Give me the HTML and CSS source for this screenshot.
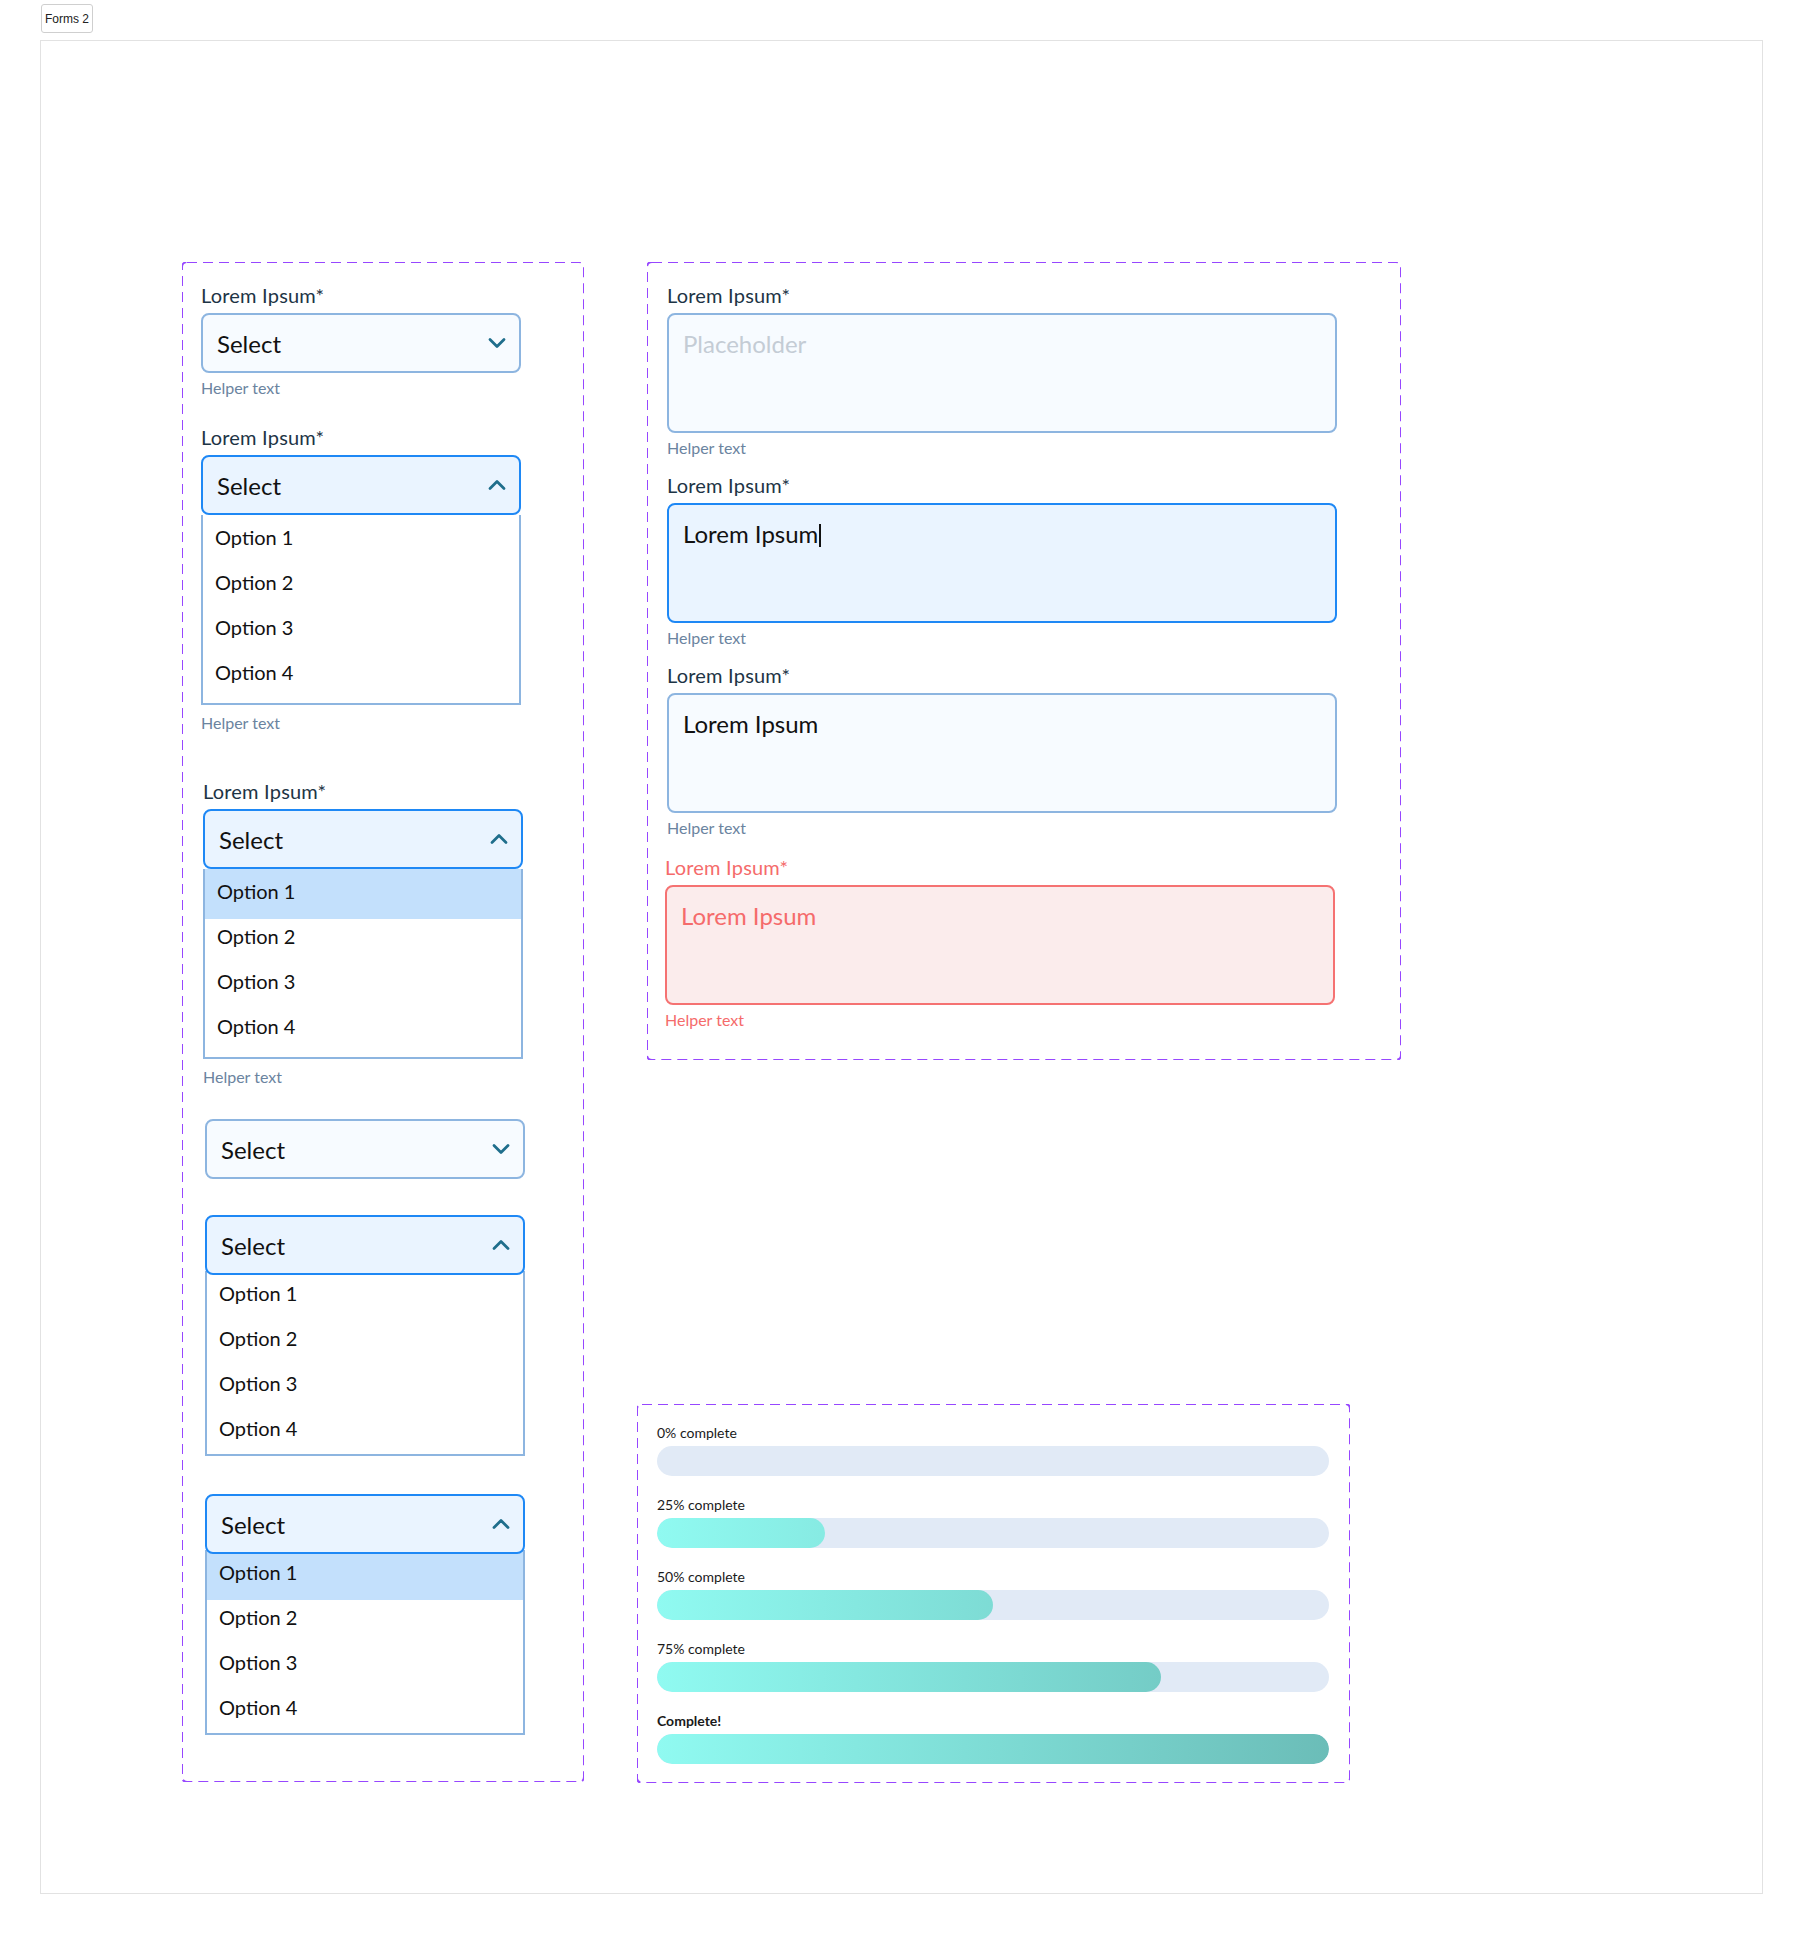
FILE: index.html
```html
<!DOCTYPE html>
<html lang="en">
<head>
<meta charset="utf-8">
<title>Forms 2</title>
<link rel="stylesheet" href="styles.css">
</head>
<body>
<div class="tag">Forms 2</div>
<div class="frame">
  <div class="box box-left">
    <div class="field">
      <div class="label">Lorem Ipsum*</div>
      <div class="select"><span>Select</span><svg class="chev" width="18" height="12" viewBox="0 0 18 12"><polyline points="2,2.5 9,9.5 16,2.5"/></svg></div>
      <div class="helper">Helper text</div>
    </div>
    <div class="field g2">
      <div class="label">Lorem Ipsum*</div>
      <div class="select open"><span>Select</span><svg class="chev" width="18" height="12" viewBox="0 0 18 12"><polyline points="2,9.5 9,2.5 16,9.5"/></svg></div>
      <div class="list">
        <div class="opt">Option 1</div>
        <div class="opt">Option 2</div>
        <div class="opt">Option 3</div>
        <div class="opt">Option 4</div>
      </div>
      <div class="helper after-list">Helper text</div>
    </div>
    <div class="field g3 shift2">
      <div class="label">Lorem Ipsum*</div>
      <div class="select open"><span>Select</span><svg class="chev" width="18" height="12" viewBox="0 0 18 12"><polyline points="2,9.5 9,2.5 16,9.5"/></svg></div>
      <div class="list">
        <div class="opt active">Option 1</div>
        <div class="opt">Option 2</div>
        <div class="opt">Option 3</div>
        <div class="opt">Option 4</div>
      </div>
      <div class="helper after-list">Helper text</div>
    </div>
    <div class="field g4 shift4">
      <div class="select"><span>Select</span><svg class="chev" width="18" height="12" viewBox="0 0 18 12"><polyline points="2,2.5 9,9.5 16,2.5"/></svg></div>
    </div>
    <div class="field g5 shift4">
      <div class="select open"><span>Select</span><svg class="chev" width="18" height="12" viewBox="0 0 18 12"><polyline points="2,9.5 9,2.5 16,9.5"/></svg></div>
      <div class="list tight">
        <div class="opt">Option 1</div>
        <div class="opt">Option 2</div>
        <div class="opt">Option 3</div>
        <div class="opt">Option 4</div>
      </div>
    </div>
    <div class="field g6 shift4">
      <div class="select open"><span>Select</span><svg class="chev" width="18" height="12" viewBox="0 0 18 12"><polyline points="2,9.5 9,2.5 16,9.5"/></svg></div>
      <div class="list tight">
        <div class="opt active">Option 1</div>
        <div class="opt">Option 2</div>
        <div class="opt">Option 3</div>
        <div class="opt">Option 4</div>
      </div>
    </div>
  </div>

  <div class="col-right">
    <div class="box box-text">
      <div class="field">
        <div class="label">Lorem Ipsum*</div>
        <div class="textarea placeholder">Placeholder</div>
        <div class="helper">Helper text</div>
      </div>
      <div class="field t2">
        <div class="label">Lorem Ipsum*</div>
        <div class="textarea focus">Lorem Ipsum<span class="caret"></span></div>
        <div class="helper">Helper text</div>
      </div>
      <div class="field t3">
        <div class="label">Lorem Ipsum*</div>
        <div class="textarea">Lorem Ipsum</div>
        <div class="helper">Helper text</div>
      </div>
      <div class="field t4 err">
        <div class="label">Lorem Ipsum*</div>
        <div class="textarea">Lorem Ipsum</div>
        <div class="helper">Helper text</div>
      </div>
    </div>

    <div class="box box-progress">
      <div class="prog">
        <div class="prog-label">0% complete</div>
        <div class="track"></div>
      </div>
      <div class="prog">
        <div class="prog-label">25% complete</div>
        <div class="track"><div class="fill" style="width:25%"></div></div>
      </div>
      <div class="prog">
        <div class="prog-label">50% complete</div>
        <div class="track"><div class="fill" style="width:50%"></div></div>
      </div>
      <div class="prog">
        <div class="prog-label">75% complete</div>
        <div class="track"><div class="fill" style="width:75%"></div></div>
      </div>
      <div class="prog">
        <div class="prog-label done">Complete!</div>
        <div class="track"><div class="fill" style="width:100%"></div></div>
      </div>
    </div>
  </div>
</div>
</body>
</html>
```

FILE: styles.css
```css
* { box-sizing: border-box; }

body {
  margin: 0;
  background: #ffffff;
  font-family: Lato, "Noto Sans", sans-serif;
  color: #111111;
}

.tag {
  margin: 4px 0 0 41px;
  width: 52px;
  height: 29px;
  border: 1px solid #cfcfcf;
  border-radius: 3px;
  display: flex;
  align-items: center;
  justify-content: center;
  font: 12px "Liberation Sans", Arial, sans-serif;
  color: #222222;
}

.frame {
  margin: 7px 0 0 40px;
  width: 1723px;
  height: 1854px;
  border: 1px solid #e2e2e2;
  padding: 221px 0 0 141px;
  display: flex;
  align-items: flex-start;
}

.box {
  background-image: url("data:image/svg+xml,%3Csvg xmlns='http://www.w3.org/2000/svg' width='100%25' height='100%25'%3E%3Crect width='100%25' height='100%25' fill='none' rx='5' ry='5' stroke='%239747FF' stroke-width='2' stroke-dasharray='10 6'/%3E%3C/svg%3E");
  background-repeat: no-repeat;
}

/* ---------- left column: selects ---------- */
.box-left {
  width: 402px;
  padding: 21px 0 47px 19px;
}

.shift2 { margin-left: 2px; }
.shift4 { margin-left: 4px; }

.label {
  font-size: 20px;
  line-height: 24px;
  letter-spacing: 0.2px;
  color: #1d3445;
  margin-bottom: 6px;
}

.helper {
  font-size: 16px;
  line-height: 18px;
  color: #6b84a0;
  margin-top: 6px;
}
.helper.after-list { margin-top: 9px; }

.select {
  width: 320px;
  height: 60px;
  border: 2px solid #8db5e0;
  border-radius: 8px;
  background: #f7fbff;
  display: flex;
  align-items: center;
  justify-content: space-between;
  padding: 0 13px 0 14px;
  font-size: 24px;
  color: #111111;
  position: relative;
  z-index: 1;
}
.select.open {
  border-color: #1e88f5;
  background: #eaf4ff;
}

.chev polyline {
  fill: none;
  stroke: #1f6e8c;
  stroke-width: 2.8;
  stroke-linecap: round;
  stroke-linejoin: round;
}

.list {
  width: 320px;
  border: 2px solid #8db5e0;
  border-top: none;
  background: #ffffff;
  padding-bottom: 8px;
}
.list.tight {
  margin-top: -4px;
  padding-bottom: 3px;
}

.opt {
  height: 45px;
  line-height: 45px;
  padding-left: 12px;
  font-size: 20px;
  color: #111111;
}
.opt.active {
  background: #c3e0fc;
  box-shadow: 0 5px 0 #c3e0fc;
}

.g2 { margin-top: 28px; }
.g3 { margin-top: 47px; }
.g4 { margin-top: 33px; }
.g5 { margin-top: 36px; }
.g6 { margin-top: 38px; }

/* ---------- right column ---------- */
.col-right {
  margin-left: 53px;
  display: flex;
  flex-direction: column;
  align-items: flex-start;
}

.box-text {
  margin-left: 10px;
  width: 754px;
  padding: 21px 0 31px 20px;
}

.textarea {
  width: 670px;
  height: 120px;
  border: 2px solid #8db5e0;
  border-radius: 8px;
  background: #f7fbff;
  padding: 14px 14px;
  font-size: 24px;
  line-height: 29px;
  color: #111111;
}
.textarea.placeholder { color: #c4ccd5; }
.textarea.focus {
  border-color: #1e88f5;
  background: #eaf4ff;
}
.caret {
  display: inline-block;
  width: 2px;
  height: 23px;
  background: #111111;
  vertical-align: -4px;
  margin-left: 1px;
}

.t2 { margin-top: 16px; }
.t3 { margin-top: 16px; }
.t4 { margin-top: 18px; margin-left: -2px; }

.err .label,
.err .helper { color: #f56b6b; }
.err .textarea {
  border-color: #f57272;
  background: #fbecec;
  color: #f56b6b;
}

/* ---------- progress ---------- */
.box-progress {
  margin-top: 344px;
  width: 713px;
  padding: 20px 21px 19px 20px;
  display: flex;
  flex-direction: column;
  gap: 20px;
}

.prog-label {
  font-size: 14px;
  line-height: 18px;
  color: #1a1a1a;
  margin-bottom: 4px;
}
.prog-label.done { font-weight: 700; }

.track {
  height: 30px;
  border-radius: 15px;
  background: #e1eaf6;
  overflow: hidden;
}
.fill {
  height: 100%;
  border-radius: 15px;
  background: linear-gradient(90deg, #90faf1 0%, #6bbdb8 100%) 0 0 / 672px 100% no-repeat;
}
```
